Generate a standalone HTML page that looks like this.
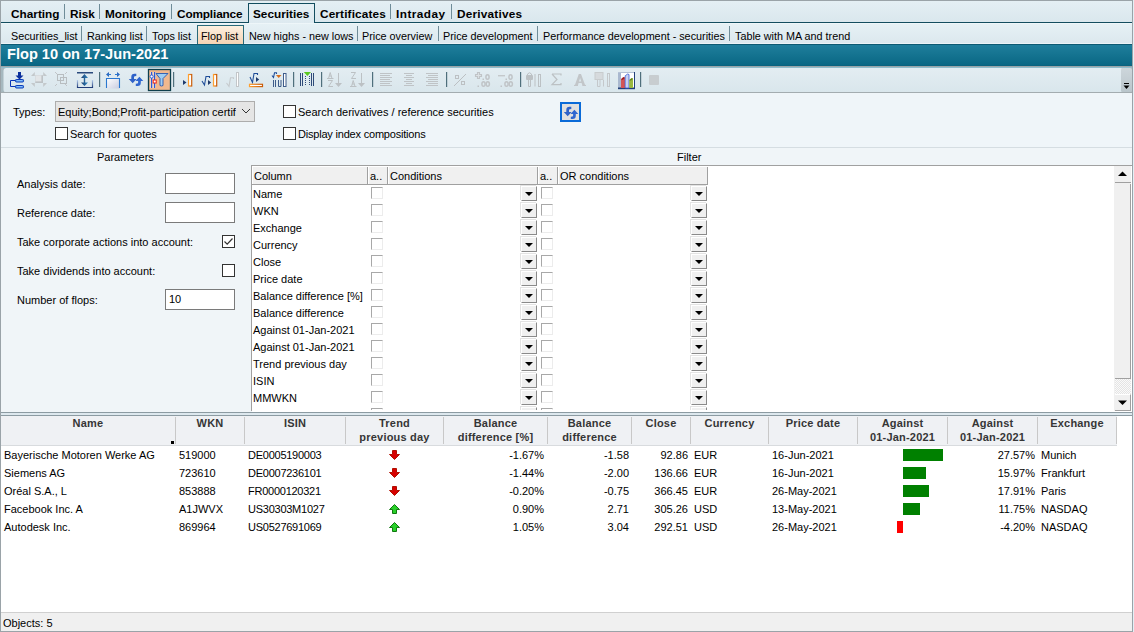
<!DOCTYPE html>
<html><head><meta charset="utf-8">
<style>
*{margin:0;padding:0;box-sizing:border-box}
html,body{width:1134px;height:632px;overflow:hidden;background:#f0f5f8}
body{position:relative;font-family:"Liberation Sans",sans-serif;font-size:11px;color:#000}
.a{position:absolute;white-space:nowrap}
.t{position:absolute;white-space:nowrap;line-height:13px}
.tab{position:absolute;white-space:nowrap;font-weight:bold;font-size:11.8px;line-height:14px;top:6.5px;color:#000}
.sep{position:absolute;width:1px;background:#6f8c98}
.st{position:absolute;white-space:nowrap;font-size:10.8px;line-height:13px;top:30px;color:#000}
.cb{position:absolute;width:13px;height:13px;border:1px solid #333;background:#fff}
.fcb{position:absolute;width:12px;height:12px;border:1px solid #a8a8a8;border-right-color:#ececec;border-bottom-color:#ececec;background:#fff}
.dd{position:absolute;width:16px;height:15px;margin-left:1px;background:#f0f0f0;border-right:1px solid #8a8a8a;border-bottom:1px solid #8a8a8a;border-left:1px solid #fff;border-top:1px solid #fff;box-shadow:-1px -1px 0 #e3e3e3}
.dd:after{content:"";position:absolute;left:3px;top:5px;border-left:4px solid transparent;border-right:4px solid transparent;border-top:4px solid #000}
.row{position:absolute;left:253px;font-size:11px;line-height:13px}
.hd{position:absolute;font-weight:bold;font-size:11px;line-height:14px;color:#363636;text-align:center;letter-spacing:0.2px}
.cs{position:absolute;top:417px;width:1px;height:27px;background:#c8c8c8}
.rc{position:absolute;font-size:11px;line-height:13px;color:#000;white-space:nowrap}
.r{text-align:right}
</style></head><body>

<!-- outer frame -->
<div class="a" style="left:0;top:0;width:1133px;height:632px;border:1px solid #9aa3a8"></div>
<div class="a" style="left:1133px;top:0;width:1px;height:632px;background:#e2f0f6"></div>

<!-- main tab bar -->
<div class="a" style="left:1px;top:1px;width:1131px;height:21px;background:linear-gradient(#e4eff4,#dae7ed)"></div>
<div class="a" style="left:1px;top:22px;width:1131px;height:1px;background:#134d5f"></div>
<div class="a" style="left:248px;top:3px;width:67px;height:21px;background:linear-gradient(#e6f0f5,#dde9ef);border:1px solid #134d5f;border-bottom:none"></div>
<div class="tab" style="left:11px">Charting</div>
<div class="sep" style="left:64px;top:4px;height:15px"></div>
<div class="tab" style="left:70px">Risk</div>
<div class="sep" style="left:99px;top:4px;height:15px"></div>
<div class="tab" style="left:105px">Monitoring</div>
<div class="sep" style="left:171px;top:4px;height:15px"></div>
<div class="tab" style="left:177px;letter-spacing:-0.14px">Compliance</div>
<div class="tab" style="left:253px">Securities</div>
<div class="tab" style="left:320px;letter-spacing:0.14px">Certificates</div>
<div class="sep" style="left:390px;top:4px;height:15px"></div>
<div class="tab" style="left:396px;letter-spacing:0.45px">Intraday</div>
<div class="sep" style="left:451px;top:4px;height:15px"></div>
<div class="tab" style="left:457px;letter-spacing:0.2px">Derivatives</div>

<!-- sub tab bar -->
<div class="a" style="left:1px;top:23px;width:1131px;height:21px;background:linear-gradient(#e6f1f5,#dce8ee);border-top:1px solid #eef6f9;border-bottom:1px solid #ebf3f7"></div>
<div class="a" style="left:197px;top:25px;width:47px;height:19px;background:linear-gradient(#fdf0e0,#f6d3b4);border:1px solid #2a6a7a;border-bottom:none"></div>
<div class="st" style="left:11px">Securities_list</div>
<div class="sep" style="left:81px;top:26px;height:15px"></div>
<div class="st" style="left:87px">Ranking list</div>
<div class="sep" style="left:146px;top:26px;height:15px"></div>
<div class="st" style="left:152px">Tops list</div>
<div class="st" style="left:201px">Flop list</div>
<div class="st" style="left:249px">New highs - new lows</div>
<div class="sep" style="left:357px;top:26px;height:15px"></div>
<div class="st" style="left:362px">Price overview</div>
<div class="sep" style="left:438px;top:26px;height:15px"></div>
<div class="st" style="left:443px">Price development</div>
<div class="sep" style="left:537px;top:26px;height:15px"></div>
<div class="st" style="left:543px">Performance development - securities</div>
<div class="sep" style="left:729px;top:26px;height:15px"></div>
<div class="st" style="left:735px">Table with MA and trend</div>

<!-- title bar -->
<div class="a" style="left:1px;top:44px;width:1131px;height:22px;background:linear-gradient(#0d5a73 0,#0d5a73 1px,#1f7e9c 1px,#13728f 12px,#0a6784 21px,#0a5f7a 22px)"></div>
<div class="a" style="left:7px;top:46px;font-weight:bold;font-size:14.6px;line-height:17px;color:#fff">Flop 10 on 17-Jun-2021</div>

<!-- toolbar -->
<svg class="a" style="left:0;top:0" width="1134" height="94" viewBox="0 0 1134 94">
<defs>
<linearGradient id="tbg" x1="0" y1="0" x2="0" y2="1"><stop offset="0" stop-color="#e3edf2"/><stop offset="1" stop-color="#d9e6ec"/></linearGradient>
<linearGradient id="ovf" x1="0" y1="0" x2="0" y2="1"><stop offset="0" stop-color="#cdd6db"/><stop offset="1" stop-color="#b9c5cb"/></linearGradient>
<linearGradient id="bb" x1="0" y1="0" x2="0" y2="1"><stop offset="0" stop-color="#7ab8f0"/><stop offset="1" stop-color="#0a3f9a"/></linearGradient>
<linearGradient id="vbr" x1="0" y1="0" x2="0" y2="1"><stop offset="0" stop-color="#b8d0f0"/><stop offset="1" stop-color="#203c78"/></linearGradient>
<linearGradient id="va" x1="0" y1="0" x2="1" y2="0"><stop offset="0" stop-color="#1c3f70"/><stop offset="1" stop-color="#2f86c0"/></linearGradient>
<linearGradient id="box5" x1="0" y1="0" x2="1" y2="1"><stop offset="0" stop-color="#ffffff"/><stop offset="1" stop-color="#c8cce0"/></linearGradient>
<linearGradient id="org" x1="0" y1="0" x2="1" y2="0"><stop offset="0" stop-color="#ffa030"/><stop offset="1" stop-color="#c85a08"/></linearGradient>
</defs>
<!-- strip -->
<rect x="1" y="66" width="1131" height="1" fill="#9aa4a8"/>
<rect x="1" y="67" width="1131" height="26" fill="#a6b8bf"/>
<rect x="1" y="67" width="1131" height="1" fill="#8fbccb"/>
<rect x="3.5" y="68" width="1120" height="24.5" rx="3" fill="url(#tbg)"/>
<rect x="1121" y="68" width="11" height="24.5" rx="2" fill="url(#ovf)"/>
<rect x="1124" y="83" width="5" height="1" fill="#000"/>
<path d="M1123.5 85.5 H1129.5 L1126.5 89Z" fill="#000"/>
<rect x="1" y="92" width="1131" height="1" fill="#a3acb0"/>

<!-- 1 import -->
<path d="M18 72 H21 V75.5 H23.5 L19.5 79.5 L15.5 75.5 H18Z" fill="#0a2f9c"/>
<path d="M10.5 80.5 H15 M10.5 80.5 V86.5 H15" fill="none" stroke="#0a35b8" stroke-width="1"/>
<rect x="15.5" y="79.5" width="8" height="2.5" rx="0.8" fill="#3f8ae8" stroke="#0a3ab8" stroke-width="1"/>
<rect x="16.5" y="80.3" width="6" height="0.9" fill="#a8d4ff"/>
<rect x="15.5" y="85.5" width="8" height="2.5" rx="0.8" fill="#3f8ae8" stroke="#0a3ab8" stroke-width="1"/>
<rect x="16.5" y="86.3" width="6" height="0.9" fill="#a8d4ff"/>

<!-- 2 gray expand -->
<g fill="#c3c8cb">
<path d="M31 76 L34.8 72 V76Z"/><path d="M47 76 L43.2 72 V76Z"/>
<path d="M31 83 H34.8 V87Z"/><path d="M47 83 H43.2 V87Z"/>
</g>
<rect x="35" y="75" width="8" height="8" fill="#cfd3d6"/>
<rect x="35.5" y="75.5" width="6" height="6" fill="#e2e5e7"/>
<rect x="41.5" y="75.5" width="1.5" height="7.5" fill="#bdc2c5"/>
<rect x="35.5" y="81.5" width="7.5" height="1.5" fill="#bdc2c5"/>

<!-- 3 gray squares -->
<rect x="57.5" y="74.5" width="6" height="6" fill="none" stroke="#b8bdc0" stroke-width="1"/>
<rect x="60.5" y="77.5" width="6" height="6" fill="none" stroke="#b8bdc0" stroke-width="1"/>
<path d="M55 72 L57 74 M67 72 L65 74 M55 86 L57 84 M67 86 L65 84" stroke="#c0c4c7" stroke-width="1"/>

<!-- 4 vertical expand -->
<rect x="77" y="72" width="16" height="1.5" fill="#2a4a7c"/>
<path d="M77.5 80 V87.5 H92.5 V80" fill="none" stroke="url(#vbr)" stroke-width="1.2"/>
<path d="M84.5 74 L88 78 H85.2 V82.5 H88 L84.5 86 L81 82.5 H83.8 V78 H81Z" fill="url(#va)"/>

<!-- sep -->
<rect x="99" y="72" width="1.2" height="15" fill="#4f6f7c"/>

<!-- 5 horizontal expand -->
<rect x="106.5" y="78.5" width="13" height="10" fill="url(#box5)"/>
<path d="M106.5 88 V78.5 H119.5 V88" fill="none" stroke="#2a78d0" stroke-width="1.1"/>
<path d="M106 74.5 L109 72 V77Z M120 74.5 L117 72 V77Z" fill="#2a68c0"/>
<path d="M108 74.5 H111 M115 74.5 H118" stroke="#2a78d0" stroke-width="1.2"/>

<!-- 6 swap -->
<path d="M136.3 73.8 H134.5 Q131.3 73.8 131.3 77 V79 H128.8 L132.7 83.2 L136.6 79 H134 V77 Q134 75.9 136.3 75.9Z" fill="#2f62c8"/>
<path d="M135.8 85.9 H137.6 Q140.8 85.9 140.8 82.7 V81 H143.3 L139.4 76.8 L135.5 81 H138.1 V82.7 Q138.1 83.8 135.8 83.8Z" fill="#2f66d0"/>

<!-- 7 active filter -->
<rect x="148.5" y="69.5" width="22" height="21" fill="#f0b88e" stroke="#0f3f4c" stroke-width="1.3"/>
<rect x="150.5" y="72" width="2" height="16" fill="#fff" opacity="0.8"/>
<rect x="153.5" y="72" width="2" height="16" fill="#fff" opacity="0.8"/>
<rect x="151" y="72" width="1.2" height="16" fill="#2c5ad8"/>
<rect x="154" y="72" width="1.2" height="16" fill="#2c5ad8"/>
<circle cx="151.6" cy="76.5" r="1.6" fill="#fff" stroke="#2c5ad8" stroke-width="1"/>
<rect x="153.2" y="80" width="3" height="3" fill="#fff" stroke="#ee2010" stroke-width="1"/>
<path d="M156 73.5 H168 L163 78.5 V85.5 L161.5 86 L160 85.5 V78.5Z" fill="#9fcdf2" stroke="#2658b0" stroke-width="0.9"/>

<rect x="173" y="72" width="1.2" height="15" fill="#4f6f7c"/>

<!-- 8 -->
<path d="M183 80 L186.5 82.5 L183 85Z" fill="#1e3a6c"/>
<rect x="188.5" y="74.5" width="3.2" height="11.5" fill="#fff" stroke="url(#org)" stroke-width="1.2"/>

<!-- 9 -->
<path d="M202 81 L204.5 85 L206 76.5 H209.5 V78" fill="none" stroke="#1f4d98" stroke-width="1.1"/>
<path d="M208 80 L211.2 82.5 L208 85Z" fill="#1e3a6c"/>
<rect x="213.5" y="74.5" width="3.2" height="11.5" fill="#fff" stroke="url(#org)" stroke-width="1.2"/>

<!-- 10 gray -->
<path d="M226.5 83 L229 86.3 L230.5 77.8 H233.5 V79" fill="none" stroke="#c6cacd" stroke-width="1.1"/>
<rect x="236.5" y="72.5" width="2" height="14" fill="#fff" stroke="#c2c6c9" stroke-width="1"/>

<!-- 11 -->
<path d="M250 77 L252.5 82.5 L254 73.5 H257.5 V75" fill="none" stroke="#1f4d98" stroke-width="1.1"/>
<path d="M256 77 L259.2 79.5 L256 82Z" fill="#1e3a6c"/>
<rect x="249.5" y="84.3" width="13" height="2.3" fill="#fff" stroke="url(#org)" stroke-width="1.2"/>

<!-- 12 -->
<path d="M272 75.5 L273.5 77.5 L274.5 72.8 H276.5 V74" fill="none" stroke="#1f4d98" stroke-width="1.1"/>
<path d="M276 75 H281.5 L278.7 78Z" fill="#d86c18"/>
<path d="M273.5 80 V87 M275.5 80 V87" stroke="#3e5c8a" stroke-width="1"/>
<path d="M278.5 80 V86.5 H281 V80" fill="none" stroke="#3e5c8a" stroke-width="1"/>
<rect x="283.5" y="73.5" width="2.5" height="13" fill="#fff" stroke="#3e5c8a" stroke-width="1"/>

<rect x="293" y="72" width="1.2" height="15" fill="#4f6f7c"/>

<!-- 13 -->
<path d="M300.5 73 V86 M302.5 73 V86 M311.5 73 V86 M313.5 73 V86" stroke="#2e4a78" stroke-width="1"/>
<path d="M305.5 76 V86 M309.5 76 V86" stroke="#2e4a78" stroke-width="1" stroke-dasharray="1 1"/>
<path d="M303.8 72 H311 L307.4 76Z" fill="#5ac820"/>

<rect x="321" y="72" width="1.2" height="15" fill="#4f6f7c"/>

<!-- 14 AZ -->
<g fill="none" stroke="#bcc1c4" stroke-width="1">
<path d="M327 78.5 H333.5 M328.5 78.5 L330.2 72.5 L332 78.5 M329 76 H331.5"/>
<path d="M328 80.5 H332.5 L328.5 86.5 H333"/>
<path d="M338.5 73 V84"/>
<path d="M361.5 73 V84"/>
<path d="M351 72.5 H355.5 L351.5 78.5 H356"/>
<path d="M350 86.5 H356.5 M351.5 86.5 L353.2 80.5 L355 86.5 M352 84 H354.5"/>
</g>
<path d="M335 83 H342 L338.5 87Z M358 83 H365 L361.5 87Z" fill="#bcc1c4"/>

<rect x="372" y="72" width="1.2" height="15" fill="#4f6f7c"/>

<!-- 15 align -->
<g fill="#bfc3c6">
<rect x="380" y="73" width="12" height="1"/><rect x="380" y="75" width="10" height="1"/><rect x="380" y="77" width="12" height="1"/><rect x="380" y="79" width="10" height="1"/><rect x="380" y="81" width="12" height="1"/><rect x="380" y="83" width="10" height="1"/><rect x="380" y="85" width="12" height="1"/>
<rect x="404" y="73" width="10" height="1"/><rect x="406" y="75" width="6" height="1"/><rect x="404" y="77" width="10" height="1"/><rect x="406" y="79" width="6" height="1"/><rect x="404" y="81" width="10" height="1"/><rect x="406" y="83" width="6" height="1"/><rect x="404" y="85" width="10" height="1"/>
<rect x="426" y="73" width="12" height="1"/><rect x="428" y="75" width="10" height="1"/><rect x="426" y="77" width="12" height="1"/><rect x="428" y="79" width="10" height="1"/><rect x="426" y="81" width="12" height="1"/><rect x="428" y="83" width="10" height="1"/><rect x="426" y="85" width="12" height="1"/>
</g>

<rect x="446" y="72" width="1.2" height="15" fill="#4f6f7c"/>

<!-- 16 % -->
<g fill="none" stroke="#bcc0c3" stroke-width="1">
<rect x="455.5" y="75.5" width="3" height="3"/><rect x="461.5" y="81.5" width="3" height="3"/>
<path d="M454 86 L466 74"/>
</g>
<!-- 17 +.0 -->
<path d="M477.5 72.5 H479.5 V74.5 H481.5 V76.5 H479.5 V78.5 H477.5 V76.5 H475.5 V74.5 H477.5Z" fill="#dde2e5" stroke="#c0c4c7" stroke-width="1.1"/>
<rect x="498" y="75" width="7" height="1.4" fill="#c4c8cb"/>
<g fill="none" stroke="#c0c4c7" stroke-width="1.5">
<ellipse cx="487.5" cy="77" rx="1.6" ry="2.3"/>
<ellipse cx="483.5" cy="84" rx="1.6" ry="2.3"/><ellipse cx="487.8" cy="84" rx="1.6" ry="2.3"/>
<ellipse cx="510.5" cy="77" rx="1.6" ry="2.3"/>
<ellipse cx="506.5" cy="84" rx="1.6" ry="2.3"/><ellipse cx="510.8" cy="84" rx="1.6" ry="2.3"/>
</g>
<g fill="#c0c4c7"><rect x="482.5" y="78.5" width="1.5" height="1.5"/><rect x="477.5" y="85.5" width="1.5" height="1.5"/>
<rect x="505.5" y="78.5" width="1.5" height="1.5"/><rect x="500.5" y="85.5" width="1.5" height="1.5"/></g>

<rect x="520" y="72" width="1.2" height="15" fill="#4f6f7c"/>

<!-- 18 lock cols -->
<g fill="none" stroke="#bcc1c4" stroke-width="1">
<path d="M527.5 75 V74 Q529.5 71.5 531.5 74 V75"/>
<path d="M528.5 80 V86.5 H530.5 V80"/>
<path d="M535 74 V86.5"/>
<rect x="538.5" y="74.5" width="2" height="12"/>
</g>
<rect x="526" y="75" width="7" height="5" rx="1" fill="#bcc1c4"/>

<!-- 19 sigma -->
<path d="M552 74 H561 V75.5 M552 74 L557 79.5 L552 84.7 H561 V83" fill="none" stroke="#bcc1c4" stroke-width="1.2"/>
<!-- 20 A -->
<path fill-rule="evenodd" fill="#c2c6c9" d="M574 86 H578 V85 L578.6 83 H581.6 L582.3 85 V86 H586 V85 L585 84.8 L581 74 H578.8 L575 84.8 L574 85Z M579 81.5 H581.2 L580.1 78Z"/>

<!-- 21 gray cols -->
<rect x="595" y="72.5" width="8" height="7" fill="#d6dadd" stroke="#c8ccce" stroke-width="1"/>
<path d="M597.5 80 V86.5 H600 V80 M603.5 80 V86.5" fill="none" stroke="#c4c8cb" stroke-width="1"/>
<rect x="607.5" y="73.5" width="2" height="13" fill="none" stroke="#c4c8cb" stroke-width="1"/>

<!-- 22 chart -->
<rect x="618" y="72" width="17" height="17" fill="#ffffff"/>
<rect x="618" y="72" width="3" height="17" fill="#a9b8cf"/>
<rect x="618" y="72" width="17" height="1" fill="#b5c2d6"/>
<rect x="634" y="72" width="1" height="17" fill="#22407a"/>
<rect x="618" y="87.5" width="17" height="1.7" fill="#22407a"/>
<path d="M621 88 V79 L623.3 77 L625 77.6 V88Z" fill="#d35656"/>
<path d="M621 79.5 L623.3 77.2 L625 77.8 L623 79.8Z" fill="#9a1c1c"/>
<path d="M625.2 88 V75.8 L627.6 74 L629 74.5 V88Z" fill="#c8d2f0" stroke="#3a5ed8" stroke-width="0.8"/>
<path d="M629.2 88 V80 L631.6 78 L633 78.5 V88Z" fill="#9ab83e"/>
<path d="M629.2 80.3 L631.6 78.2 L633 78.7 L631 80.6Z" fill="#5f7e1c"/>

<rect x="640" y="72" width="1.2" height="15" fill="#4f6f7c"/>
<!-- 23 gray square -->
<rect x="649" y="75" width="10" height="10" rx="1" fill="#c8cdd0"/>
</svg>


<!-- search panel -->
<div class="a" style="left:1px;top:93px;width:1131px;height:55px;background:#eff5f9"></div>
<div class="a" style="left:1px;top:147px;width:1131px;height:1px;background:#d5dde2"></div>
<div class="t" style="left:13px;top:106px">Types:</div>
<div class="a" style="left:55px;top:101px;width:200px;height:21px;background:#e5e5e5;border:1px solid #adadad"></div>
<div class="t" style="left:58px;top:106px;width:178px;overflow:hidden">Equity;Bond;Profit-participation certif</div>
<svg class="a" style="left:241px;top:108px" width="10" height="6"><path d="M1 1 L5 5 L9 1" fill="none" stroke="#333" stroke-width="1"/></svg>
<div class="cb" style="left:55px;top:127px"></div>
<div class="t" style="left:70px;top:128px">Search for quotes</div>
<div class="cb" style="left:283px;top:105px"></div>
<div class="t" style="left:298px;top:106px">Search derivatives / reference securities</div>
<div class="cb" style="left:283px;top:127px"></div>
<div class="t" style="left:298px;top:128px;letter-spacing:-0.2px">Display index compositions</div>
<div class="a" style="left:560px;top:102px;width:21px;height:20px;border:2px solid #0a6ad8;background:#e0e0e0"></div>
<svg class="a" style="left:0;top:0" width="600" height="130"><g transform="translate(435,33)">
<path d="M136.3 73.8 H134.5 Q131.3 73.8 131.3 77 V79 H128.8 L132.7 83.2 L136.6 79 H134 V77 Q134 75.9 136.3 75.9Z" fill="#2f62c8"/>
<path d="M135.8 85.9 H137.6 Q140.8 85.9 140.8 82.7 V81 H143.3 L139.4 76.8 L135.5 81 H138.1 V82.7 Q138.1 83.8 135.8 83.8Z" fill="#2f66d0"/></g></svg>

<!-- parameters -->
<div class="t" style="left:97px;top:151px">Parameters</div>
<div class="t" style="left:17px;top:178px">Analysis date:</div>
<div class="a" style="left:165px;top:173px;width:70px;height:21px;background:#fff;border:1px solid #7a7a7a"></div>
<div class="t" style="left:17px;top:207px">Reference date:</div>
<div class="a" style="left:165px;top:202px;width:70px;height:21px;background:#fff;border:1px solid #7a7a7a"></div>
<div class="t" style="left:17px;top:236px">Take corporate actions into account:</div>
<div class="cb" style="left:222px;top:235px"></div>
<svg class="a" style="left:222px;top:235px" width="13" height="13"><path d="M2.5 6.5 L5.2 9.2 L10.5 3.5" fill="none" stroke="#333" stroke-width="1.2"/></svg>
<div class="t" style="left:17px;top:265px">Take dividends into account:</div>
<div class="cb" style="left:222px;top:264px"></div>
<div class="t" style="left:17px;top:294px">Number of flops:</div>
<div class="a" style="left:165px;top:289px;width:70px;height:21px;background:#fff;border:1px solid #7a7a7a"></div>
<div class="t" style="left:169px;top:293px">10</div>

<!-- filter -->
<div class="t" style="left:677px;top:151px">Filter</div>
<div class="a" style="left:251px;top:165px;width:881px;height:1px;background:#a0a0a0"></div>
<div class="a" style="left:251px;top:165px;width:1px;height:246px;background:#a0a0a0"></div>
<div class="a" style="left:252px;top:166px;width:880px;height:245px;background:#fff"></div>
<div class="a" style="left:252px;top:166px;width:456px;height:18px;background:#f0f0f0"></div>
<div class="a" style="left:252px;top:184px;width:456px;height:1px;background:#a0a0a0"></div>
<div class="a" style="left:367px;top:166px;width:1px;height:18px;background:#a0a0a0"></div>
<div class="a" style="left:368px;top:166px;width:1px;height:18px;background:#fff"></div>
<div class="a" style="left:387px;top:166px;width:1px;height:18px;background:#a0a0a0"></div>
<div class="a" style="left:388px;top:166px;width:1px;height:18px;background:#fff"></div>
<div class="a" style="left:537px;top:166px;width:1px;height:18px;background:#a0a0a0"></div>
<div class="a" style="left:538px;top:166px;width:1px;height:18px;background:#fff"></div>
<div class="a" style="left:557px;top:166px;width:1px;height:18px;background:#a0a0a0"></div>
<div class="a" style="left:558px;top:166px;width:1px;height:18px;background:#fff"></div>
<div class="a" style="left:707px;top:166px;width:1px;height:18px;background:#a0a0a0"></div>
<div class="a" style="left:708px;top:166px;width:1px;height:18px;background:#fff"></div>
<div class="a" style="left:252px;top:166px;width:1px;height:18px;background:#fff"></div>
<div class="a" style="left:252px;top:166px;width:456px;height:1px;background:#fff"></div>
<div class="t" style="left:254px;top:170px">Column</div>
<div class="t" style="left:370px;top:170px">a..</div>
<div class="t" style="left:390px;top:170px">Conditions</div>
<div class="t" style="left:540px;top:170px">a..</div>
<div class="t" style="left:560px;top:170px">OR conditions</div>
<div class="t" style="left:253px;top:188px">Name</div>
<div class="fcb" style="left:371px;top:187px"></div>
<div class="dd" style="left:520px;top:186px"></div>
<div class="fcb" style="left:541px;top:187px"></div>
<div class="dd" style="left:690px;top:186px"></div>
<div class="t" style="left:253px;top:205px">WKN</div>
<div class="fcb" style="left:371px;top:204px"></div>
<div class="dd" style="left:520px;top:203px"></div>
<div class="fcb" style="left:541px;top:204px"></div>
<div class="dd" style="left:690px;top:203px"></div>
<div class="t" style="left:253px;top:222px">Exchange</div>
<div class="fcb" style="left:371px;top:221px"></div>
<div class="dd" style="left:520px;top:220px"></div>
<div class="fcb" style="left:541px;top:221px"></div>
<div class="dd" style="left:690px;top:220px"></div>
<div class="t" style="left:253px;top:239px">Currency</div>
<div class="fcb" style="left:371px;top:238px"></div>
<div class="dd" style="left:520px;top:237px"></div>
<div class="fcb" style="left:541px;top:238px"></div>
<div class="dd" style="left:690px;top:237px"></div>
<div class="t" style="left:253px;top:256px">Close</div>
<div class="fcb" style="left:371px;top:255px"></div>
<div class="dd" style="left:520px;top:254px"></div>
<div class="fcb" style="left:541px;top:255px"></div>
<div class="dd" style="left:690px;top:254px"></div>
<div class="t" style="left:253px;top:273px">Price date</div>
<div class="fcb" style="left:371px;top:272px"></div>
<div class="dd" style="left:520px;top:271px"></div>
<div class="fcb" style="left:541px;top:272px"></div>
<div class="dd" style="left:690px;top:271px"></div>
<div class="t" style="left:253px;top:290px">Balance difference [%]</div>
<div class="fcb" style="left:371px;top:289px"></div>
<div class="dd" style="left:520px;top:288px"></div>
<div class="fcb" style="left:541px;top:289px"></div>
<div class="dd" style="left:690px;top:288px"></div>
<div class="t" style="left:253px;top:307px">Balance difference</div>
<div class="fcb" style="left:371px;top:306px"></div>
<div class="dd" style="left:520px;top:305px"></div>
<div class="fcb" style="left:541px;top:306px"></div>
<div class="dd" style="left:690px;top:305px"></div>
<div class="t" style="left:253px;top:324px">Against 01-Jan-2021</div>
<div class="fcb" style="left:371px;top:323px"></div>
<div class="dd" style="left:520px;top:322px"></div>
<div class="fcb" style="left:541px;top:323px"></div>
<div class="dd" style="left:690px;top:322px"></div>
<div class="t" style="left:253px;top:341px">Against 01-Jan-2021</div>
<div class="fcb" style="left:371px;top:340px"></div>
<div class="dd" style="left:520px;top:339px"></div>
<div class="fcb" style="left:541px;top:340px"></div>
<div class="dd" style="left:690px;top:339px"></div>
<div class="t" style="left:253px;top:358px">Trend previous day</div>
<div class="fcb" style="left:371px;top:357px"></div>
<div class="dd" style="left:520px;top:356px"></div>
<div class="fcb" style="left:541px;top:357px"></div>
<div class="dd" style="left:690px;top:356px"></div>
<div class="t" style="left:253px;top:375px">ISIN</div>
<div class="fcb" style="left:371px;top:374px"></div>
<div class="dd" style="left:520px;top:373px"></div>
<div class="fcb" style="left:541px;top:374px"></div>
<div class="dd" style="left:690px;top:373px"></div>
<div class="t" style="left:253px;top:392px">MMWKN</div>
<div class="fcb" style="left:371px;top:391px"></div>
<div class="dd" style="left:520px;top:390px"></div>
<div class="fcb" style="left:541px;top:391px"></div>
<div class="dd" style="left:690px;top:390px"></div>
<div class="t" style="left:253px;top:409px">Price unit</div>
<div class="fcb" style="left:371px;top:408px"></div>
<div class="dd" style="left:520px;top:407px"></div>
<div class="fcb" style="left:541px;top:408px"></div>
<div class="dd" style="left:690px;top:407px"></div>
<div class="a" style="left:252px;top:410px;width:880px;height:2px;background:#fff"></div>
<div class="a" style="left:1114px;top:166px;width:17px;height:245px;background:#f0f0f0"></div>
<div class="a" style="left:1115px;top:167px;width:16px;height:16px;background:#f0f0f0;border-bottom:1px solid #a0a0a0"></div>
<svg class="a" style="left:1118px;top:171px" width="9" height="6"><path d="M0 5 L4.5 0.5 L9 5Z" fill="#000"/></svg>
<div class="a" style="left:1115px;top:184px;width:16px;height:195px;background:#f0f0f0;border-right:1px solid #a0a0a0;border-bottom:1px solid #a0a0a0"></div>
<div class="a" style="left:1115px;top:379px;width:16px;height:15px;background:repeating-conic-gradient(#e4e4e4 0 25%,#fafafa 0 50%) 0 0/2px 2px"></div>
<div class="a" style="left:1115px;top:394px;width:16px;height:17px;background:#f0f0f0;border-right:1px solid #a0a0a0;border-bottom:1px solid #a0a0a0;border-top:1px solid #fff"></div>
<svg class="a" style="left:1118px;top:400px" width="9" height="6"><path d="M0 0.5 L9 0.5 L4.5 5Z" fill="#000"/></svg>

<!-- splitter -->
<div class="a" style="left:1px;top:412px;width:1131px;height:4px;background:#dde8ee;border-top:1px solid #8c9ba2;border-bottom:1px solid #8c9ba2"></div>

<!-- results -->
<div class="a" style="left:1px;top:416px;width:1131px;height:196px;background:#fff"></div>
<div class="a" style="left:1px;top:416px;width:1116px;height:30px;background:#eff1f4;border-bottom:1px solid #d8dbde"></div>
<div class="hd" style="left:1px;width:174px;top:416px">Name</div>
<div class="cs" style="left:175px"></div>
<div class="hd" style="left:176px;width:68px;top:416px">WKN</div>
<div class="cs" style="left:244px"></div>
<div class="hd" style="left:245px;width:100px;top:416px">ISIN</div>
<div class="cs" style="left:345px"></div>
<div class="hd" style="left:346px;width:97px;top:416px">Trend</div>
<div class="hd" style="left:346px;width:97px;top:430px">previous day</div>
<div class="cs" style="left:443px"></div>
<div class="hd" style="left:444px;width:103px;top:416px">Balance</div>
<div class="hd" style="left:444px;width:103px;top:430px">difference [%]</div>
<div class="cs" style="left:547px"></div>
<div class="hd" style="left:548px;width:83px;top:416px">Balance</div>
<div class="hd" style="left:548px;width:83px;top:430px">difference</div>
<div class="cs" style="left:631px"></div>
<div class="hd" style="left:632px;width:58px;top:416px">Close</div>
<div class="cs" style="left:690px"></div>
<div class="hd" style="left:691px;width:77px;top:416px">Currency</div>
<div class="cs" style="left:768px"></div>
<div class="hd" style="left:769px;width:88px;top:416px">Price date</div>
<div class="cs" style="left:857px"></div>
<div class="hd" style="left:858px;width:89px;top:416px">Against</div>
<div class="hd" style="left:858px;width:89px;top:430px">01-Jan-2021</div>
<div class="cs" style="left:947px"></div>
<div class="hd" style="left:948px;width:89px;top:416px">Against</div>
<div class="hd" style="left:948px;width:89px;top:430px">01-Jan-2021</div>
<div class="cs" style="left:1037px"></div>
<div class="hd" style="left:1038px;width:78px;top:416px">Exchange</div>
<div class="cs" style="left:1116px"></div>
<div class="a" style="left:171px;top:441px;width:3px;height:3px;background:#000"></div>
<div class="rc" style="left:4px;top:449px">Bayerische Motoren Werke AG</div>
<div class="rc" style="left:179px;top:449px">519000</div>
<div class="rc" style="left:248px;top:449px;letter-spacing:-0.25px">DE0005190003</div>
<svg class="a" style="left:389px;top:450px" width="11" height="11"><path d="M3.5 0.5 H7.5 V4.5 H10.5 L5.5 9.5 L0.5 4.5 H3.5Z" fill="#d80000" stroke="#b01000" stroke-width="1"/></svg>
<div class="rc r" style="left:444px;width:100px;top:449px">-1.67%</div>
<div class="rc r" style="left:548px;width:81px;top:449px">-1.58</div>
<div class="rc r" style="left:632px;width:56px;top:449px">92.86</div>
<div class="rc" style="left:694px;top:449px">EUR</div>
<div class="rc" style="left:772px;top:449px">16-Jun-2021</div>
<div class="a" style="left:903px;top:449px;width:40px;height:12px;background:#008000"></div>
<div class="rc r" style="left:948px;width:87px;top:449px">27.57%</div>
<div class="rc" style="left:1041px;top:449px">Munich</div>
<div class="rc" style="left:4px;top:467px">Siemens AG</div>
<div class="rc" style="left:179px;top:467px">723610</div>
<div class="rc" style="left:248px;top:467px;letter-spacing:-0.25px">DE0007236101</div>
<svg class="a" style="left:389px;top:468px" width="11" height="11"><path d="M3.5 0.5 H7.5 V4.5 H10.5 L5.5 9.5 L0.5 4.5 H3.5Z" fill="#d80000" stroke="#b01000" stroke-width="1"/></svg>
<div class="rc r" style="left:444px;width:100px;top:467px">-1.44%</div>
<div class="rc r" style="left:548px;width:81px;top:467px">-2.00</div>
<div class="rc r" style="left:632px;width:56px;top:467px">136.66</div>
<div class="rc" style="left:694px;top:467px">EUR</div>
<div class="rc" style="left:772px;top:467px">16-Jun-2021</div>
<div class="a" style="left:903px;top:467px;width:23px;height:12px;background:#008000"></div>
<div class="rc r" style="left:948px;width:87px;top:467px">15.97%</div>
<div class="rc" style="left:1041px;top:467px">Frankfurt</div>
<div class="rc" style="left:4px;top:485px">Oréal S.A., L</div>
<div class="rc" style="left:179px;top:485px">853888</div>
<div class="rc" style="left:248px;top:485px;letter-spacing:-0.25px">FR0000120321</div>
<svg class="a" style="left:389px;top:486px" width="11" height="11"><path d="M3.5 0.5 H7.5 V4.5 H10.5 L5.5 9.5 L0.5 4.5 H3.5Z" fill="#d80000" stroke="#b01000" stroke-width="1"/></svg>
<div class="rc r" style="left:444px;width:100px;top:485px">-0.20%</div>
<div class="rc r" style="left:548px;width:81px;top:485px">-0.75</div>
<div class="rc r" style="left:632px;width:56px;top:485px">366.45</div>
<div class="rc" style="left:694px;top:485px">EUR</div>
<div class="rc" style="left:772px;top:485px">26-May-2021</div>
<div class="a" style="left:903px;top:485px;width:26px;height:12px;background:#008000"></div>
<div class="rc r" style="left:948px;width:87px;top:485px">17.91%</div>
<div class="rc" style="left:1041px;top:485px">Paris</div>
<div class="rc" style="left:4px;top:503px">Facebook Inc. A</div>
<div class="rc" style="left:179px;top:503px">A1JWVX</div>
<div class="rc" style="left:248px;top:503px;letter-spacing:-0.25px">US30303M1027</div>
<svg class="a" style="left:389px;top:504px" width="11" height="11"><path d="M3.5 9.5 H7.5 V5.5 H10.5 L5.5 0.5 L0.5 5.5 H3.5Z" fill="#28d028" stroke="#107810" stroke-width="1"/></svg>
<div class="rc r" style="left:444px;width:100px;top:503px">0.90%</div>
<div class="rc r" style="left:548px;width:81px;top:503px">2.71</div>
<div class="rc r" style="left:632px;width:56px;top:503px">305.26</div>
<div class="rc" style="left:694px;top:503px">USD</div>
<div class="rc" style="left:772px;top:503px">13-May-2021</div>
<div class="a" style="left:903px;top:503px;width:17px;height:12px;background:#008000"></div>
<div class="rc r" style="left:948px;width:87px;top:503px">11.75%</div>
<div class="rc" style="left:1041px;top:503px">NASDAQ</div>
<div class="rc" style="left:4px;top:521px">Autodesk Inc.</div>
<div class="rc" style="left:179px;top:521px">869964</div>
<div class="rc" style="left:248px;top:521px;letter-spacing:-0.25px">US0527691069</div>
<svg class="a" style="left:389px;top:522px" width="11" height="11"><path d="M3.5 9.5 H7.5 V5.5 H10.5 L5.5 0.5 L0.5 5.5 H3.5Z" fill="#28d028" stroke="#107810" stroke-width="1"/></svg>
<div class="rc r" style="left:444px;width:100px;top:521px">1.05%</div>
<div class="rc r" style="left:548px;width:81px;top:521px">3.04</div>
<div class="rc r" style="left:632px;width:56px;top:521px">292.51</div>
<div class="rc" style="left:694px;top:521px">USD</div>
<div class="rc" style="left:772px;top:521px">26-May-2021</div>
<div class="a" style="left:897px;top:521px;width:6px;height:12px;background:#ff0000"></div>
<div class="rc r" style="left:948px;width:87px;top:521px">-4.20%</div>
<div class="rc" style="left:1041px;top:521px">NASDAQ</div>

<!-- status -->
<div class="a" style="left:1px;top:612px;width:1131px;height:1px;background:#d0d0d0"></div>
<div class="a" style="left:1px;top:613px;width:1131px;height:18px;background:#f0f0f0"></div>
<div class="t" style="left:3px;top:617px">Objects: 5</div>

</body></html>
